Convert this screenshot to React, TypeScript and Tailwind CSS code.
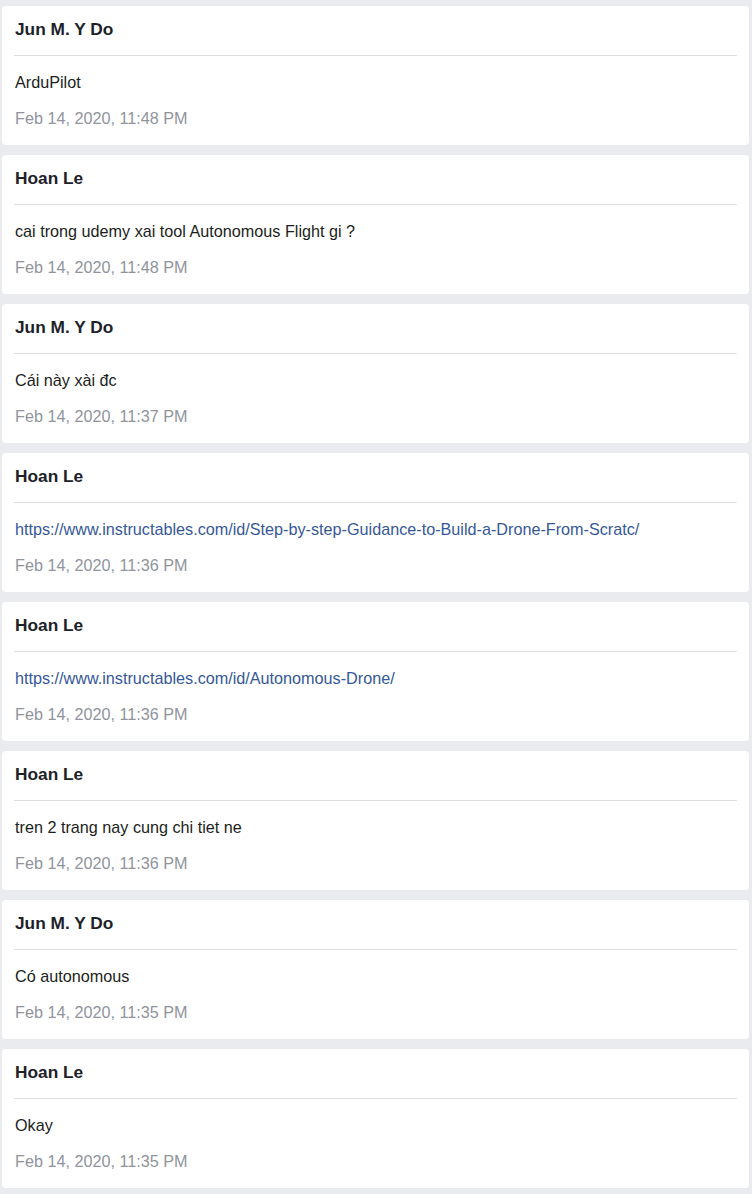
import React from "react";

type Msg = { name: string; text: string; date: string; link?: boolean };

const msgs: Msg[] = [
  { name: "Jun M. Y Do", text: "ArduPilot", date: "Feb 14, 2020, 11:48 PM" },
  { name: "Hoan Le", text: "cai trong udemy xai tool Autonomous Flight gi ?", date: "Feb 14, 2020, 11:48 PM" },
  { name: "Jun M. Y Do", text: "Cái này xài đc", date: "Feb 14, 2020, 11:37 PM" },
  {
    name: "Hoan Le",
    text: "https://www.instructables.com/id/Step-by-step-Guidance-to-Build-a-Drone-From-Scratc/",
    date: "Feb 14, 2020, 11:36 PM",
    link: true,
  },
  { name: "Hoan Le", text: "https://www.instructables.com/id/Autonomous-Drone/", date: "Feb 14, 2020, 11:36 PM", link: true },
  { name: "Hoan Le", text: "tren 2 trang nay cung chi tiet ne", date: "Feb 14, 2020, 11:36 PM" },
  { name: "Jun M. Y Do", text: "Có autonomous", date: "Feb 14, 2020, 11:35 PM" },
  { name: "Hoan Le", text: "Okay", date: "Feb 14, 2020, 11:35 PM" },
];

export default function App() {
  return (
    <div
      className="min-h-[1194px] bg-[#e9ebee] pt-[6px] pb-[6px] pl-[2px] pr-[3px] flex flex-col gap-[10px]"
      style={{ fontFamily: '"Liberation Sans", Arial, sans-serif' }}
    >
      {msgs.map((m, i) => (
        <div key={i} className="bg-white rounded-[4px] px-[12px] pt-[11px] pb-[15px] h-[139px]">
          <div className="pl-px text-[17.3px] leading-[24px] font-bold text-[#1d2129]">{m.name}</div>
          <div className="mt-[14px] h-px bg-[#dddfe2]" />
          <div className="mt-[14px] pl-px text-[16.2px] leading-[24px] whitespace-nowrap">
            {m.link ? (
              <a href="#" className="text-[#365899]">
                {m.text}
              </a>
            ) : (
              <span className="text-[#1c1e21]">{m.text}</span>
            )}
          </div>
          <div className="mt-[12px] pl-px text-[16.2px] leading-[24px] text-[#90949c]">{m.date}</div>
        </div>
      ))}
    </div>
  );
}
